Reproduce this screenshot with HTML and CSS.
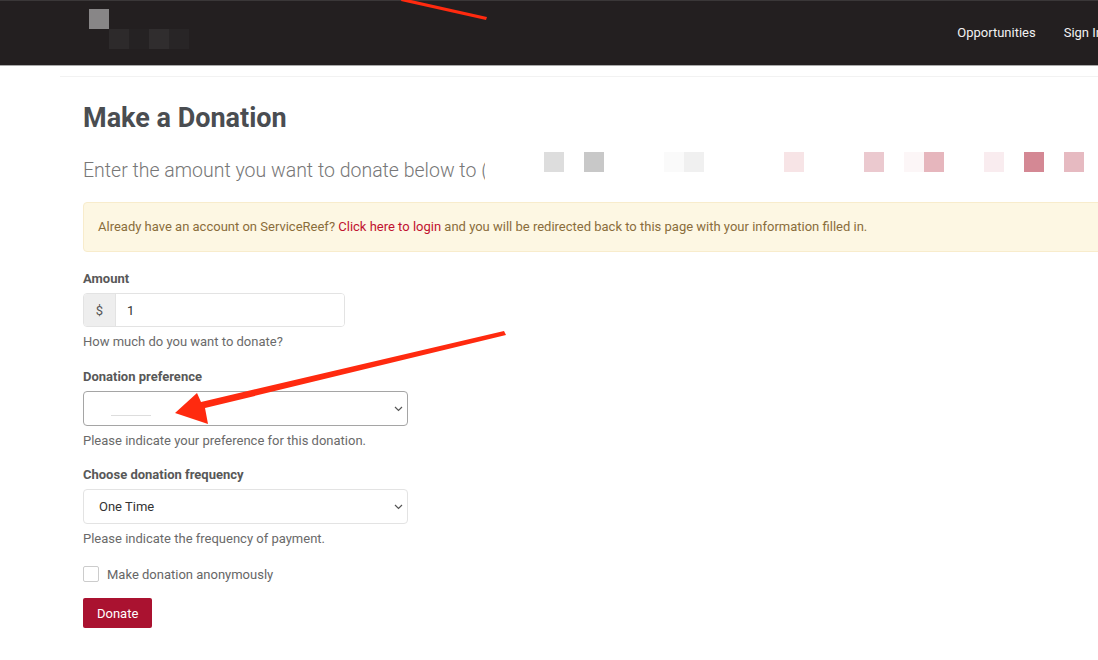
FILE: index.html
```html
<!DOCTYPE html>
<html lang="en">
<head>
    <meta charset="UTF-8">
    <meta name="viewport" content="width=device-width, initial-scale=1.0">
    <title>Make a Donation</title>
    <link rel="stylesheet" href="styles.css">
</head>
<body>
    <header class="header">
        <svg class="logo" width="100" height="41" viewBox="0 0 100 41">
            <rect x="0" y="0" width="20" height="20" fill="#888687"/>
            <rect x="20" y="20" width="20" height="20" fill="#2d2a2b"/>
            <rect x="40" y="20" width="20" height="20" fill="#252223"/>
            <rect x="60" y="20" width="20" height="20" fill="#302d2e"/>
            <rect x="80" y="20" width="20" height="20" fill="#282526"/>
        </svg>
        <nav class="nav">
            <a href="#">Opportunities</a>
            <a href="#">Sign In</a>
        </nav>
    </header>

    <div class="page">
        <h1 class="title">Make a Donation</h1>
        <p class="lead">Enter the amount you want to donate below to <span class="cut">(</span><svg class="blur" width="620" height="24" viewBox="0 0 620 24">
            <rect x="58" y="0" width="20" height="20" fill="#dddddd"/>
            <rect x="98" y="0" width="20" height="20" fill="#c8c8c8"/>
            <rect x="178" y="0" width="20" height="20" fill="#fafafa"/>
            <rect x="198" y="0" width="20" height="20" fill="#f0f0f0"/>
            <rect x="298" y="0" width="20" height="20" fill="#f7e4e6"/>
            <rect x="378" y="0" width="20" height="20" fill="#ebc9cf"/>
            <rect x="418" y="0" width="20" height="20" fill="#fcf6f7"/>
            <rect x="438" y="0" width="20" height="20" fill="#e6b6bd"/>
            <rect x="498" y="0" width="20" height="20" fill="#f9ecef"/>
            <rect x="538" y="0" width="20" height="20" fill="#d48894"/>
            <rect x="578" y="0" width="20" height="20" fill="#e6bac1"/>
            <rect x="612" y="23" width="2" height="1" fill="#888"/>
        </svg></p>

        <div class="alert">
            Already have an account on ServiceReef? <a href="#">Click here to login</a> and you will be redirected back to this page with your information filled in.
        </div>

        <form class="form">
            <div class="field">
                <label class="label">Amount</label>
                <div class="input-group">
                    <span class="addon">$</span>
                    <input type="text" class="input" value="1">
                </div>
                <p class="help">How much do you want to donate?</p>
            </div>

            <div class="field field-tight">
                <label class="label">Donation preference</label>
                <div class="select select-active">
                    <span class="blank-line"></span>
                    <svg class="chevron" width="9" height="6" viewBox="0 0 9 6"><path d="M1 1 L4.5 4.5 L8 1" fill="none" stroke="#555" stroke-width="1.2"/></svg>
                </div>
                <p class="help">Please indicate your preference for this donation.</p>
            </div>

            <div class="field">
                <label class="label">Choose donation frequency</label>
                <div class="select">
                    <span>One Time</span>
                    <svg class="chevron" width="9" height="6" viewBox="0 0 9 6"><path d="M1 1 L4.5 4.5 L8 1" fill="none" stroke="#555" stroke-width="1.2"/></svg>
                </div>
                <p class="help">Please indicate the frequency of payment.</p>
            </div>

            <label class="check">
                <span class="box"></span>
                Make donation anonymously
            </label>

            <button type="button" class="btn">Donate</button>
        </form>
    </div>

    <!-- annotation arrows drawn on top of the screenshot -->
    <svg class="marks" width="1098" height="660" viewBox="0 0 1098 660">
        <path d="M402 -2 L487 17 L486 20 L401 1 Z" fill="#ff2a0f"/>
        <path d="M504 331 L506 335 L205 408 L208 424 L175 413 L197 393 L201 402 Z" fill="#ff2a0f"/>
    </svg>
</body>
</html>
```

FILE: styles.css
```css
body {
    margin: 0;
    font-family: Roboto, 'Liberation Sans', sans-serif;
    background: #fff;
    color: #555;
    position: relative;
    overflow: hidden;
    height: 660px;
}

.header {
    background: #231f20;
    border-top: 1px solid #3a3738;
    border-bottom: 1px solid #a9a9a9;
    display: flex;
    align-items: flex-start;
    justify-content: space-between;
    box-sizing: border-box;
    height: 66px;
}

.logo {
    display: block;
    margin: 8px 0 0 89px;
}

.nav {
    display: flex;
    gap: 28px;
    margin-right: -5px;
    padding-top: 24px;
    overflow: hidden;
}

.nav a {
    color: #f2f2f2;
    font-size: 13px;
    text-decoration: none;
    white-space: nowrap;
}

.page {
    margin: 10px 0 0 60px;
    border-top: 1px solid #f2f2f2;
    padding-left: 23px;
}

.title {
    margin: 26px 0 0;
    font-size: 27px;
    font-weight: 700;
    color: #4a4d51;
    line-height: 30px;
}

.lead {
    margin: 19px 0 0;
    font-size: 19.5px;
    font-weight: 300;
    color: #777;
    line-height: 24px;
    white-space: nowrap;
}

.cut {
    display: inline-block;
    width: 4px;
    overflow: hidden;
    vertical-align: bottom;
}

.blur {
    vertical-align: 1px;
    margin-left: 1px;
}

.alert {
    margin-top: 19px;
    margin-right: -20px;
    padding: 15px 14px;
    background: #fdf7e3;
    border: 1px solid #f8eccc;
    border-radius: 4px;
    color: #8a6d3b;
    font-size: 13px;
    line-height: 18px;
}

.alert a {
    color: #c1122f;
    text-decoration: none;
}

.form {
    margin-top: 19px;
}

.field {
    margin-bottom: 20px;
}

.field-tight {
    margin-bottom: 19px;
}

.label {
    display: block;
    font-size: 13px;
    font-weight: 700;
    color: #585858;
    margin-bottom: 7px;
}

.input-group {
    display: flex;
    width: 262px;
    height: 34px;
    border: 1px solid #e3e3e3;
    border-radius: 4px;
    box-sizing: border-box;
    overflow: hidden;
}

.addon {
    width: 31px;
    background: #eee;
    display: flex;
    align-items: center;
    justify-content: center;
    font-size: 13px;
    color: #555;
}

.input {
    flex: 1;
    border: none;
    border-left: 1px solid #e3e3e3;
    outline: none;
    padding: 0 11px;
    font-family: inherit;
    font-size: 13px;
    color: #333;
}

.help {
    margin: 7px 0 0;
    font-size: 13px;
    color: #6a6a6a;
}

.select {
    width: 325px;
    height: 35px;
    box-sizing: border-box;
    border: 1px solid #e3e3e3;
    border-radius: 4px;
    display: flex;
    align-items: center;
    justify-content: space-between;
    padding: 0 4px 0 15px;
    font-size: 13px;
    color: #333;
}

.select-active {
    border-color: #a5a5a5;
}

.blank-line {
    width: 40px;
    height: 1px;
    background: #ddd;
    margin: 13px 0 0 12px;
}

.check {
    display: flex;
    align-items: center;
    gap: 8px;
    font-size: 13px;
    color: #666;
    margin-top: 14px;
}

.box {
    width: 14px;
    height: 14px;
    border: 1px solid #ccc;
    border-radius: 2px;
}

.btn {
    margin-top: 16px;
    background: #aa1230;
    color: #fff;
    border: none;
    border-radius: 2px;
    height: 30px;
    padding: 0 14px;
    font-family: inherit;
    font-size: 13px;
}

.marks {
    position: absolute;
    left: 0;
    top: 0;
    pointer-events: none;
}
```
